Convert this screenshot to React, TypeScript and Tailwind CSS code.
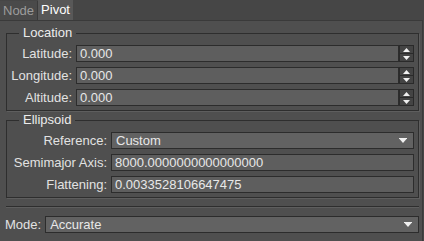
import React from "react";

const font = { fontFamily: '"Liberation Sans", Arial, sans-serif' };

function Spin() {
  return (
    <div className="flex flex-col w-[15px] h-[17px]">
      <div className="flex-1 flex items-center justify-center bg-[#444444] border border-[#2a2a2a]">
        <svg width="7" height="4" viewBox="0 0 7 4">
          <path d="M0 4 L3.5 0 L7 4 Z" fill="#f0f0f0" />
        </svg>
      </div>
      <div className="flex-1 flex items-center justify-center bg-[#444444] border border-t-0 border-[#2a2a2a]">
        <svg width="7" height="4" viewBox="0 0 7 4">
          <path d="M0 0 L7 0 L3.5 4 Z" fill="#f0f0f0" />
        </svg>
      </div>
    </div>
  );
}

function Field({ value, spin }: { value: string; spin?: boolean }) {
  return (
    <div className="flex h-[17px]">
      <div className="flex-1 h-full bg-[#5e5e5e] border border-[#2c2c2c] px-[3px] leading-[15px] text-[#e8e8e8]">
        {value}
      </div>
      {spin && <Spin />}
    </div>
  );
}

function Combo({ value }: { value: string }) {
  return (
    <div className="flex items-center h-[17px] bg-[#626262] border border-[#2c2c2c] px-[4px] text-[#e8e8e8]">
      <span className="flex-1 leading-[15px]">{value}</span>
      <svg width="8" height="5" viewBox="0 0 8 5" className="mr-[2px]">
        <rect x="0" y="0" width="8" height="1" fill="#f0f0f0" />
        <path d="M0.5 1 L7.5 1 L4 5 Z" fill="#f0f0f0" />
      </svg>
    </div>
  );
}

function Group({ title, labelW, rows }: { title: string; labelW: string; rows: React.ReactNode[][] }) {
  return (
    <fieldset className="ml-[6px] mr-[3px] border border-[#2e2e2e] shadow-[1px_1px_0_#5e5e5e] pl-[4px] pr-[4px] pb-[4px]">
      <legend className="ml-[8px] px-[4px] text-[#ececec] leading-[14px]">{title}</legend>
      <div className={`grid ${labelW} gap-x-[4px] gap-y-[5px] mt-[5px]`}>
        {rows.map((r, i) => (
          <React.Fragment key={i}>
            <div className="text-right text-[#e2e2e2] leading-[17px]">{r[0]}</div>
            <div>{r[1]}</div>
          </React.Fragment>
        ))}
      </div>
    </fieldset>
  );
}

export default function App() {
  return (
    <div className="w-[424px] h-[241px] bg-[#464646] text-[13px] overflow-hidden" style={font}>
      <div className="flex h-[20px] items-end">
        <div className="h-[19px] px-[3px] bg-[#4a4a4a] text-[#9c9c9c] leading-[19px] border-r border-[#3a3a3a]">Node</div>
        <div className="h-[20px] px-[3px] bg-[#585858] text-white leading-[20px]">Pivot</div>
      </div>
      <div className="h-[221px] bg-[#4f4f4f] border-t border-r border-[#3a3a3a] mr-[1px] pt-[5px]">
        <Group
          title="Location"
          labelW="grid-cols-[61px_1fr]"
          rows={[
            ["Latitude:", <Field value="0.000" spin />],
            ["Longitude:", <Field value="0.000" spin />],
            ["Altitude:", <Field value="0.000" spin />],
          ]}
        />
        <div className="h-[2px]" />
        <Group
          title="Ellipsoid"
          labelW="grid-cols-[96px_1fr]"
          rows={[
            ["Reference:", <Combo value="Custom" />],
            ["Semimajor Axis:", <Field value="8000.0000000000000000" />],
            ["Flattening:", <Field value="0.0033528106647475" />],
          ]}
        />
        <div className="ml-[6px] mr-[3px] mt-[8px] border-t border-[#2e2e2e] shadow-[0_1px_0_#5e5e5e]" />
        <div className="flex items-center gap-[4px] ml-[5px] mr-[3px] mt-[8px]">
          <span className="text-[#e2e2e2]">Mode:</span>
          <div className="flex-1"><Combo value="Accurate" /></div>
        </div>
      </div>
    </div>
  );
}
